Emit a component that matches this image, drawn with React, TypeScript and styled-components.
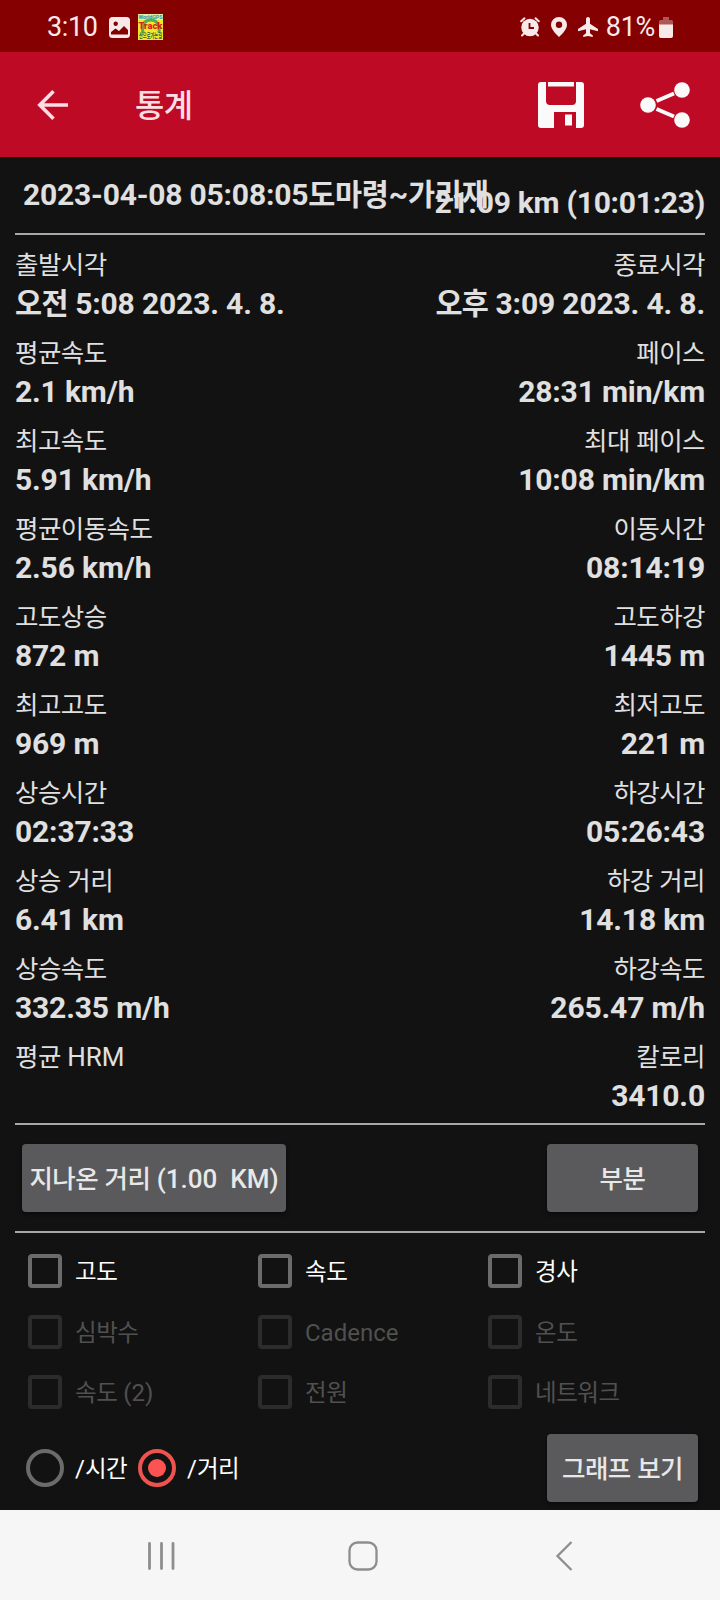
import React from 'react';
import styled, { createGlobalStyle } from 'styled-components';

const GlobalStyle = createGlobalStyle`
  * { box-sizing: border-box; }
  body { margin: 0; background: #121212; font-family: Roboto, "Noto Sans CJK KR", sans-serif; }
`;

const Screen = styled.div`
  width: 720px;
  height: 1600px;
  display: flex;
  flex-direction: column;
  overflow: hidden;
  background: #121212;
  color: #e0e0e0;
`;

const Hangul = styled.span`
  font-size: 0.98em;
  letter-spacing: -0.021em;
`;

const Txt = ({ children }: { children: string }) => (
  <>
    {children.split(/([\uac00-\ud7a3]+)/).map((part, i) =>
      i % 2 ? <Hangul key={i}>{part}</Hangul> : part
    )}
  </>
);

const StatusBar = styled.header`
  height: 52px;
  flex: none;
  display: flex;
  align-items: center;
  justify-content: space-between;
  padding: 2px 47px 0 47px;
  background: #850000;
  color: #f8eaea;
  font-size: 27px;
`;

const StatusGroup = styled.div`
  display: flex;
  align-items: center;
`;

const Clock = styled.span`
  width: 62px;
  letter-spacing: -0.4px;
  white-space: nowrap;
`;

const Percent = styled.span`
  margin: 0 4px 0 8px;
  letter-spacing: -0.3px;
`;

const Glyph = styled.svg<{ $left?: number }>`
  display: block;
  flex: none;
  margin-left: ${p => p.$left ?? 0}px;
`;

const AppBar = styled.div`
  height: 105px;
  flex: none;
  display: flex;
  align-items: center;
  padding: 0 30px 0 37px;
  background: #be0a25;
`;

const Title = styled.h1`
  flex: 1;
  margin: -3px 0 0 66px;
  font-size: 32.5px;
  font-weight: 500;
  color: #ffdde3;
`;

const Content = styled.main`
  flex: 1;
  display: flex;
  flex-direction: column;
  padding: 0 15px;
  border-top: 1px solid #2a0408;
`;

const TrackHeader = styled.div`
  height: 77px;
  flex: none;
  display: flex;
  align-items: flex-start;
  justify-content: space-between;
  border-bottom: 2px solid #a8a8a8;
  font-size: 30px;
  font-weight: 700;
  line-height: 36px;
  white-space: nowrap;
`;

const TrackName = styled.div`
  width: 0;
  padding: 19px 0 0 8px;
  letter-spacing: -0.2px;

  ${Hangul} {
    letter-spacing: -0.2px;
  }
`;

const TrackTotal = styled.div`
  padding-top: 27px;
  letter-spacing: -0.27px;
`;

const Stats = styled.section`
  height: 890px;
  flex: none;
  padding-top: 12px;
  border-bottom: 2px solid #a8a8a8;
`;

const StatRow = styled.div`
  height: 88px;
  display: flex;
  justify-content: space-between;
`;

const Stat = styled.div<{ $end?: boolean }>`
  text-align: ${p => (p.$end ? 'right' : 'left')};
`;

const StatLabel = styled.div`
  height: 36px;
  font-size: 26px;
  line-height: 36px;
`;

const StatValue = styled.div`
  height: 41px;
  font-size: 30px;
  line-height: 41px;
  font-weight: 700;
  letter-spacing: -0.15px;
`;

const Actions = styled.div`
  height: 108px;
  flex: none;
  display: flex;
  align-items: center;
  justify-content: space-between;
  padding: 0 7px;
  border-bottom: 2px solid #a8a8a8;
`;

const Button = styled.button<{ $width: number }>`
  width: ${p => p.$width}px;
  height: 68px;
  padding: 2px 0 0;
  border: 0;
  border-radius: 4px;
  background: #5a5a5c;
  box-shadow: 0 2px 4px rgba(0, 0, 0, 0.5);
  color: #e8e8e8;
  font-family: inherit;
  font-size: 26px;
  font-weight: 500;
  line-height: 36px;
  white-space: pre;
`;

const Options = styled.div`
  display: grid;
  grid-template-columns: repeat(3, 230px);
  grid-template-rows: 60px 61px 60px;
  padding: 8px 0 0 13px;
`;

const Option = styled.label<{ $disabled?: boolean }>`
  display: flex;
  align-items: center;
  gap: 13px;
  font-size: 24px;
  line-height: 36px;
  color: ${p => (p.$disabled ? '#505050' : '#ffffff')};
`;

const OptionText = styled.span`
  height: 34px;
`;

const Box = styled.span<{ $disabled?: boolean }>`
  width: 34px;
  height: 34px;
  border: 4px solid ${p => (p.$disabled ? '#2c2c2c' : '#6b6b6b')};
  border-radius: 4px;
`;

const GraphBar = styled.div`
  display: flex;
  align-items: center;
  height: 68px;
  margin-top: 12px;
  padding: 0 7px 0 11px;
`;

const RadioOption = styled.label`
  display: flex;
  align-items: center;
  gap: 11px;
  width: 112px;
  font-size: 24px;
  line-height: 36px;
  color: #ffffff;
  white-space: nowrap;
`;

const Radio = styled.span<{ $on?: boolean }>`
  width: 38px;
  height: 38px;
  flex: none;
  display: grid;
  place-items: center;
  border: 4px solid ${p => (p.$on ? '#ef5350' : '#6b6b6b')};
  border-radius: 50%;
`;

const Dot = styled.span`
  width: 18px;
  height: 18px;
  border-radius: 50%;
  background: #ff5252;
`;

const Spacer = styled.div`
  flex: 1;
`;

const NavBar = styled.nav`
  height: 90px;
  flex: none;
  display: flex;
  align-items: center;
  justify-content: space-between;
  padding: 1px 147px 0 146px;
  background: #f6f6f6;
`;

const stats: [string, string, string, string][] = [
  ['출발시각', '오전 5:08 2023. 4. 8.', '종료시각', '오후 3:09 2023. 4. 8.'],
  ['평균속도', '2.1 km/h', '페이스', '28:31 min/km'],
  ['최고속도', '5.91 km/h', '최대 페이스', '10:08 min/km'],
  ['평균이동속도', '2.56 km/h', '이동시간', '08:14:19'],
  ['고도상승', '872 m', '고도하강', '1445 m'],
  ['최고고도', '969 m', '최저고도', '221 m'],
  ['상승시간', '02:37:33', '하강시간', '05:26:43'],
  ['상승 거리', '6.41 km', '하강 거리', '14.18 km'],
  ['상승속도', '332.35 m/h', '하강속도', '265.47 m/h'],
  ['평균 HRM', '', '칼로리', '3410.0'],
];

const options: [string, boolean][] = [
  ['고도', true], ['속도', true], ['경사', true],
  ['심박수', false], ['Cadence', false], ['온도', false],
  ['속도 (2)', false], ['전원', false], ['네트워크', false],
];

const TrackAppIcon = () => (
  <Glyph $left={8} width="25" height="26" viewBox="0 0 25 26">
    <rect width="25" height="26" fill="#f3e62c" />
    <rect width="25" height="6" fill="#d9efaa" />
    <path d="M5 19C3 9 8 6 13 6s9 4 8 13" fill="none" stroke="#53b04a" strokeWidth="3" />
    <text x="0.5" y="5" fontSize="5" fontWeight="700" fill="#2b9a9a" textLength="24" lengthAdjust="spacingAndGlyphs">WorldGPS</text>
    <text x="0.5" y="15" fontSize="9" fontWeight="900" fill="#d8231a" textLength="24" lengthAdjust="spacingAndGlyphs">Track</text>
    <text x="1" y="23.500" fontSize="7" fontWeight="700" fill="#1f5c50" textLength="23" lengthAdjust="spacingAndGlyphs">산으로가는길</text>
  </Glyph>
);

export default function App() {
  return (
    <Screen>
      <GlobalStyle />
      <StatusBar>
        <StatusGroup>
          <Clock>3:10</Clock>
          <Glyph width="21" height="21" viewBox="0 0 21 21">
            <rect width="21" height="21" rx="3.5" fill="#f8eaea" />
            <circle cx="6.7" cy="6.7" r="2.2" fill="#850000" />
            <path d="M2 17.500v-2.500l4.500-3.500 3.500 2.500 5-5 4 4v4.500z" fill="#850000" />
          </Glyph>
          <TrackAppIcon />
        </StatusGroup>
        <StatusGroup>
          <Glyph width="20" height="20" viewBox="0 0 20 20" fill="none" stroke="#f8eaea" strokeLinecap="round">
            <circle cx="10" cy="10.500" r="8.700" fill="#f8eaea" stroke="none" />
            <path d="M1.200 4.300L4.500 1.300M18.800 4.300L15.500 1.300M4 16.500l-2 2M16 16.500l2 2" strokeWidth="2" />
            <path d="M9.500 6v5h4.500" stroke="#850000" strokeWidth="1.800" strokeLinecap="butt" />
          </Glyph>
          <Glyph $left={11} width="16" height="20" viewBox="0 0 16 20">
            <path fillRule="evenodd" d="M8 0a8 8 0 0 1 8 8c0 5-8 12-8 12S0 13 0 8a8 8 0 0 1 8-8zm0 4.500a3.200 3.200 0 1 0 0 6.400 3.200 3.200 0 0 0 0-6.400z" fill="#f8eaea" />
          </Glyph>
          <Glyph $left={11} width="20" height="20" viewBox="0 0 20 20">
            <path d="M10 0c1.400 0 2 1 2 2v4.700L20 12v2.200l-8-2v4l2.800 2.200V20L10 19l-4.800 1v-1.600L8 16.200v-4l-8 2V12l8-5.300V2c0-1 .6-2 2-2z" fill="#f8eaea" />
          </Glyph>
          <Percent>81%</Percent>
          <Glyph width="14" height="21" viewBox="0 0 14 21">
            <path d="M4 0h6v3h2.500a1.500 1.500 0 0 1 1.500 1.500V8H0V4.500A1.500 1.500 0 0 1 1.500 3H4z" fill="#b05656" />
            <path d="M0 7.500h14V19a2 2 0 0 1-2 2H2a2 2 0 0 1-2-2z" fill="#f8eaea" />
          </Glyph>
        </StatusGroup>
      </StatusBar>
      <AppBar>
        <Glyph width="32" height="32" viewBox="0 0 32 32" fill="none" stroke="#ffdde3" strokeWidth="3.600">
          <path d="M31 16H3M16.500 2.300L2.800 16l13.700 13.700" />
        </Glyph>
        <Title><Txt>통계</Txt></Title>
        <Glyph width="46" height="46" viewBox="0 0 46 46" fill="#fafafa">
          <path d="M3 0h5v19a4 4 0 0 0 4 4h22a4 4 0 0 0 4-4V0h5a3 3 0 0 1 3 3v40a3 3 0 0 1-3 3h-5V30H16v16H3a3 3 0 0 1-3-3V3a3 3 0 0 1 3-3z" />
          <path d="M10 0h26v4.500H10zM27 32.500h7v11h-7z" />
        </Glyph>
        <Glyph $left={56} width="50" height="46" viewBox="0 0 50 46" fill="#fafafa">
          <circle cx="8" cy="23" r="7.800" />
          <circle cx="42" cy="8" r="7.800" />
          <circle cx="42" cy="38" r="7.800" />
          <path d="M16.500 19L34 11.500M16.500 27L34 34.500" stroke="#fafafa" strokeWidth="4" />
        </Glyph>
      </AppBar>
      <Content>
        <TrackHeader>
          <TrackName><Txt>2023-04-08 05:08:05도마령~가리재</Txt></TrackName>
          <TrackTotal>21.09 km (10:01:23)</TrackTotal>
        </TrackHeader>
        <Stats>
          {stats.map(([l, lv, r, rv]) => (
            <StatRow key={l}>
              <Stat>
                <StatLabel><Txt>{l}</Txt></StatLabel>
                <StatValue><Txt>{lv}</Txt></StatValue>
              </Stat>
              <Stat $end>
                <StatLabel><Txt>{r}</Txt></StatLabel>
                <StatValue><Txt>{rv}</Txt></StatValue>
              </Stat>
            </StatRow>
          ))}
        </Stats>
        <Actions>
          <Button $width={264}><Txt>{'지나온 거리 (1.00  KM)'}</Txt></Button>
          <Button $width={151}><Txt>부분</Txt></Button>
        </Actions>
        <Options>
          {options.map(([name, enabled]) => (
            <Option key={name} $disabled={!enabled}>
              <Box $disabled={!enabled} />
              <OptionText><Txt>{name}</Txt></OptionText>
            </Option>
          ))}
        </Options>
        <GraphBar>
          <RadioOption><Radio /><OptionText><Txt>/시간</Txt></OptionText></RadioOption>
          <RadioOption><Radio $on><Dot /></Radio><OptionText><Txt>/거리</Txt></OptionText></RadioOption>
          <Spacer />
          <Button $width={151}><Txt>그래프 보기</Txt></Button>
        </GraphBar>
      </Content>
      <NavBar>
        <Glyph width="30" height="30" viewBox="0 0 30 30" stroke="#8e8e8e" strokeWidth="2.800" strokeLinecap="round">
          <path d="M3.500 2.500v25M15.500 2.500v25M27 2.500v25" />
        </Glyph>
        <Glyph width="30" height="30" viewBox="0 0 30 30" fill="none" stroke="#8e8e8e" strokeWidth="2.300">
          <rect x="1.500" y="1.500" width="27" height="27" rx="8" />
        </Glyph>
        <Glyph width="24" height="30" viewBox="0 0 24 30" fill="none" stroke="#8e8e8e" strokeWidth="2.300">
          <path d="M22.500 1L8.500 15l14 14" />
        </Glyph>
      </NavBar>
    </Screen>
  );
}
